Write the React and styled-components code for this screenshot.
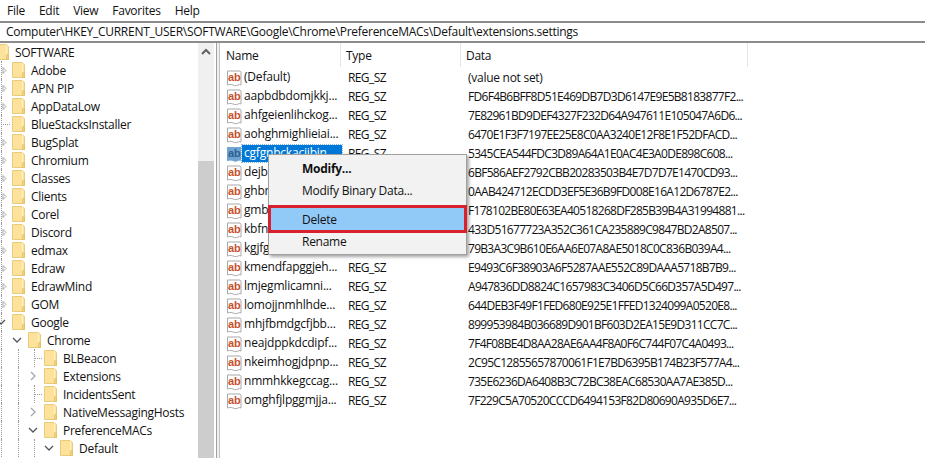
import React from "react";
import styled, { createGlobalStyle } from "styled-components";

const Global = createGlobalStyle`
  html, body {
    margin: 0;
    height: 458px;
    overflow: hidden;
    background: #fff;
  }
  body {
    font-family: "Open Sans", "Noto Sans", sans-serif;
    font-size: 12px;
    letter-spacing: -0.27px;
    color: #111;
  }
`;

const Window = styled.div`
  position: relative;
  width: 925px;
  height: 458px;
  display: flex;
  flex-direction: column;
  overflow: hidden;
`;

const MenuBar = styled.div`
  height: 21px;
  display: flex;
  align-items: center;
  gap: 14px;
  padding-left: 7px;
  flex: none;
`;

const AddressBar = styled.div`
  height: 18px;
  line-height: 17px;
  border-top: 2px solid #8c8c8c;
  border-bottom: 2px solid #8c8c8c;
  padding-left: 6px;
  flex: none;
  white-space: nowrap;
`;

const Panes = styled.div`
  flex: 1;
  display: flex;
  min-height: 0;
`;

const TreePane = styled.div`
  width: 214px;
  display: flex;
  flex: none;
  overflow: hidden;
`;

const TreeClip = styled.div`
  flex: 1;
  min-width: 0;
  overflow: hidden;
`;

const TreeList = styled.div`
  margin-left: -23px;
`;

const TreeRow = styled.div`
  position: relative;
  height: 18px;
  display: flex;
  align-items: center;
  padding-left: ${({ $depth }) => $depth * 16}px;
  white-space: nowrap;
`;

const Expander = styled.span`
  width: 16px;
  height: 18px;
  flex: none;
  display: flex;
  align-items: center;
  justify-content: center;
  margin-right: 3px;
`;

const TreeLabel = styled.span`
  margin-left: 6px;
`;

const GuideV = styled.span`
  position: absolute;
  top: 0;
  bottom: 0;
  left: ${({ $x }) => $x + 23}px;
  border-left: 1px dotted #9a9a9a;
`;

const GuideH = styled.span`
  position: absolute;
  top: 9px;
  width: 7px;
  left: ${({ $x }) => $x + 23}px;
  border-top: 1px dotted #9a9a9a;
`;

const Scrollbar = styled.div`
  width: 16px;
  flex: none;
  background: #f0f0f0;
  display: flex;
  flex-direction: column;
`;

const ScrollArrow = styled.div`
  height: 17px;
  display: flex;
  align-items: center;
  justify-content: center;
  flex: none;
`;

const ScrollSpace = styled.div`
  height: 101px;
  flex: none;
`;

const ScrollThumb = styled.div`
  flex: 1;
  background: #cdcdcd;
`;

const Splitter = styled.div`
  width: 4px;
  flex: none;
  margin-left: 2px;
  background: #f0f0f0;
  border-left: 1px solid #a0a0a0;
  border-right: 1px solid #c4c4c4;
  box-sizing: border-box;
`;

const ListPane = styled.div`
  flex: 1;
  min-width: 0;
  overflow: hidden;
`;

const HeaderRow = styled.div`
  height: 25px;
  display: flex;
  padding-left: 1px;
`;

const HeaderCell = styled.div`
  width: ${({ $w }) => $w}px;
  height: 24px;
  line-height: 26px;
  padding-left: 5px;
  box-sizing: border-box;
  border-right: 1px solid #e5e5e5;
  flex: none;
`;

const Row = styled.div`
  height: 19px;
  display: flex;
  align-items: center;
  padding-left: 6px;
  white-space: nowrap;
`;

const IconWrap = styled.span`
  width: 16px;
  height: 16px;
  flex: none;
  display: flex;
`;

const NameCell = styled.span`
  width: 100px;
  height: 17px;
  line-height: 16px;
  flex: none;
  padding-left: 2px;
  box-sizing: border-box;
  margin-right: 6px;
  letter-spacing: -0.2px;
  background: ${({ $selected }) => ($selected ? "#0078d7" : "transparent")};
  color: ${({ $selected }) => ($selected ? "#fff" : "inherit")};
  outline: ${({ $selected }) => ($selected ? "1px dotted #7fb9e8" : "none")};
`;

const TypeCell = styled.span`
  width: 120px;
  flex: none;
  letter-spacing: -0.6px;
`;

const DataCell = styled.span`
  flex: none;
  letter-spacing: ${({ $hex }) => ($hex ? "-0.7px" : "-0.27px")};
`;

const ContextMenu = styled.div`
  position: absolute;
  left: 268px;
  top: 154px;
  width: 199px;
  height: 101px;
  box-sizing: border-box;
  background: #f2f2f2;
  border: 1px solid #a0a0a0;
  box-shadow: 2px 2px 3px rgba(0, 0, 0, 0.35);
  display: flex;
  flex-direction: column;
  padding-top: 2px;
`;

const MenuItem = styled.div`
  height: ${({ $h }) => $h || 22}px;
  flex: none;
  display: flex;
  align-items: center;
  padding-left: 33px;
  font-weight: ${({ $bold }) => ($bold ? 700 : 400)};
  box-sizing: border-box;
`;

const MenuGap = styled.div`
  height: 4px;
  flex: none;
`;

const DeleteItem = styled(MenuItem)`
  height: 28px;
  background: #91c9f7;
  border: 3px solid #d9202f;
  margin: 0 -1px;
  padding-left: 31px;
`;

const Folder = () => (
  <svg width="13" height="16" viewBox="0 0 13 16" style={{ flex: "none" }}>
    <path d="M0.5 0.5h9.5l2.5 2v13h-12z" fill="#fce29b" stroke="#e9cb7c" />
    <path d="M10.5 10.5h2v5h-2z" fill="#f5d27a" stroke="#e3bd62" strokeWidth="0.7" />
    <path d="M10.5 1v9.5" stroke="#fff0c4" />
  </svg>
);

const RegIcon = () => (
  <svg width="16" height="17" viewBox="0 0 16 17">
    <path
      d="M1.5 1h12.5l1 1.5v12.5c-2-1.5-4 1.5-6.500 .5s-4-1.500-7 -.5z"
      fill="#fff"
      stroke="#a9a9a9"
    />
    <text
      x="2"
      y="11"
      letterSpacing="0"
      fontFamily="'Liberation Sans', sans-serif"
      fontWeight="700"
      fontSize="11"
      fill="#c8502d"
    >
      ab
    </text>
  </svg>
);

const SelectedRegIcon = () => (
  <svg width="16" height="17" viewBox="0 0 16 17">
    <path d="M1 1h14v14c-2-1.500-4 1.500-6.500 .5s-4-1.500-7.500 -.5z" fill="#6fa3d2" />
    <text
      x="2"
      y="11"
      letterSpacing="0"
      fontFamily="'Liberation Sans', sans-serif"
      fontWeight="700"
      fontSize="11"
      fill="#2c5f90"
    >
      ab
    </text>
  </svg>
);

const chevronPaths = {
  down: "M1 3l4 4 4-4",
  right: "M3 1l4 4-4 4",
  up: "M1 7l4-4 4 4",
};

const Chevron = ({ dir, color, weight = 1.3 }) => (
  <svg width="10" height="10" viewBox="0 0 10 10">
    <path d={chevronPaths[dir]} fill="none" stroke={color} strokeWidth={weight} />
  </svg>
);

const MiniTriangle = () => (
  <svg width="5" height="7" viewBox="0 0 5 7" style={{ marginLeft: 6 }}>
    <path d="M1 0.5l3 3-3 3z" fill="#fff" stroke="#a6a6a6" />
  </svg>
);

const tree = [
  { label: "SOFTWARE", depth: 0 },
  { label: "Adobe", depth: 1, exp: "tri", guides: [1] },
  { label: "APN PIP", depth: 1, exp: "tri", guides: [1] },
  { label: "AppDataLow", depth: 1, exp: "tri", guides: [1] },
  { label: "BlueStacksInstaller", depth: 1, stub: 3, guides: [1] },
  { label: "BugSplat", depth: 1, exp: "tri", guides: [1] },
  { label: "Chromium", depth: 1, exp: "tri", guides: [1] },
  { label: "Classes", depth: 1, exp: "tri", guides: [1] },
  { label: "Clients", depth: 1, exp: "tri", guides: [1] },
  { label: "Corel", depth: 1, exp: "tri", guides: [1] },
  { label: "Discord", depth: 1, exp: "tri", guides: [1] },
  { label: "edmax", depth: 1, exp: "tri", guides: [1] },
  { label: "Edraw", depth: 1, exp: "tri", guides: [1] },
  { label: "EdrawMind", depth: 1, exp: "tri", guides: [1] },
  { label: "GOM", depth: 1, exp: "tri", guides: [1] },
  { label: "Google", depth: 1, exp: "down", guides: [1] },
  { label: "Chrome", depth: 2, exp: "down", guides: [1] },
  { label: "BLBeacon", depth: 3, guides: [1, 18, 34], stub: 35 },
  { label: "Extensions", depth: 3, exp: "right", guides: [1, 18] },
  { label: "IncidentsSent", depth: 3, guides: [1, 18, 34], stub: 35 },
  { label: "NativeMessagingHosts", depth: 3, exp: "right", guides: [1, 18] },
  { label: "PreferenceMACs", depth: 3, exp: "down", guides: [1, 18] },
  { label: "Default", depth: 4, exp: "down", guides: [1, 18, 34] },
];

const values = [
  ["(Default)", "(value not set)"],
  ["aapbdbdomjkkj...", "FD6F4B6BFF8D51E469DB7D3D6147E9E5B8183877F2..."],
  ["ahfgeienlihckog...", "7E82961BD9DEF4327F232D64A947611E105047A6D6..."],
  ["aohghmighlieiai...", "6470E1F3F7197EE25E8C0AA3240E12F8E1F52DFACD..."],
  ["cgfgnbckacjibin...", "5345CEA544FDC3D89A64A1E0AC4E3A0DE898C608...", true],
  ["dejbmgkcbdkl...", "6BF586AEF2792CBB20283503B4E7D7D7E1470CD93..."],
  ["ghbmnnjooekp...", "0AAB424712ECDD3EF5E36B9FD008E16A12D6787E2..."],
  ["gmbmikajjgmn...", "F178102BE80E63EA40518268DF285B39B4A31994881..."],
  ["kbfnbcaeplbci...", "433D51677723A352C361CA235889C9847BD2A8507..."],
  ["kgjfgplpablkjn...", "79B3A3C9B610E6AA6E07A8AE5018C0C836B039A4..."],
  ["kmendfapggjeh...", "E9493C6F38903A6F5287AAE552C89DAAA5718B7B9..."],
  ["lmjegmlicamni...", "A947836DD8824C1657983C3406D5C66D357A5D497..."],
  ["lomojjnmhlhde...", "644DEB3F49F1FED680E925E1FFED1324099A0520E8..."],
  ["mhjfbmdgcfjbb...", "899953984B036689D901BF603D2EA15E9D311CC7C..."],
  ["neajdppkdcdipf...", "7F4F08BE4D8AA28AE6AA4F8A0F6C744F07C4A0493..."],
  ["nkeimhogjdpnp...", "2C95C12855657870061F1E7BD6395B174B23F577A4..."],
  ["nmmhkkegccag...", "735E6236DA6408B3C72BC38EAC68530AA7AE385D..."],
  ["omghfjlpggmjja...", "7F229C5A70520CCCD6494153F82D80690A935D6E7..."],
];

export default function App() {
  return (
    <Window>
      <Global />
      <MenuBar>
        <span>File</span>
        <span>Edit</span>
        <span>View</span>
        <span>Favorites</span>
        <span>Help</span>
      </MenuBar>
      <AddressBar>
        Computer\HKEY_CURRENT_USER\SOFTWARE\Google\Chrome\PreferenceMACs\Default\extensions.settings
      </AddressBar>
      <Panes>
        <TreePane>
          <TreeClip>
            <TreeList>
              {tree.map((n) => (
                <TreeRow key={n.label} $depth={n.depth}>
                  {(n.guides || []).map((x) => (
                    <GuideV key={x} $x={x} />
                  ))}
                  {n.stub && <GuideH $x={n.stub} />}
                  <Expander>
                    {n.exp === "tri" && <MiniTriangle />}
                    {n.exp === "down" && <Chevron dir="down" color="#555" />}
                    {n.exp === "right" && <Chevron dir="right" color="#a6a6a6" />}
                  </Expander>
                  <Folder />
                  <TreeLabel>{n.label}</TreeLabel>
                </TreeRow>
              ))}
            </TreeList>
          </TreeClip>
          <Scrollbar>
            <ScrollArrow>
              <Chevron dir="up" color="#606060" weight={2} />
            </ScrollArrow>
            <ScrollSpace />
            <ScrollThumb />
          </Scrollbar>
        </TreePane>
        <Splitter />
        <ListPane>
          <HeaderRow>
            <HeaderCell $w={120}>Name</HeaderCell>
            <HeaderCell $w={120}>Type</HeaderCell>
            <HeaderCell $w={287}>Data</HeaderCell>
          </HeaderRow>
          {values.map(([name, data, selected]) => (
            <Row key={name}>
              <IconWrap>{selected ? <SelectedRegIcon /> : <RegIcon />}</IconWrap>
              <NameCell $selected={selected}>{name}</NameCell>
              <TypeCell>REG_SZ</TypeCell>
              <DataCell $hex={!data.startsWith("(")}>{data}</DataCell>
            </Row>
          ))}
        </ListPane>
      </Panes>
      <ContextMenu>
        <MenuItem $bold>Modify...</MenuItem>
        <MenuItem>Modify Binary Data...</MenuItem>
        <MenuGap />
        <DeleteItem>Delete</DeleteItem>
        <MenuItem $h={17}>Rename</MenuItem>
      </ContextMenu>
    </Window>
  );
}
